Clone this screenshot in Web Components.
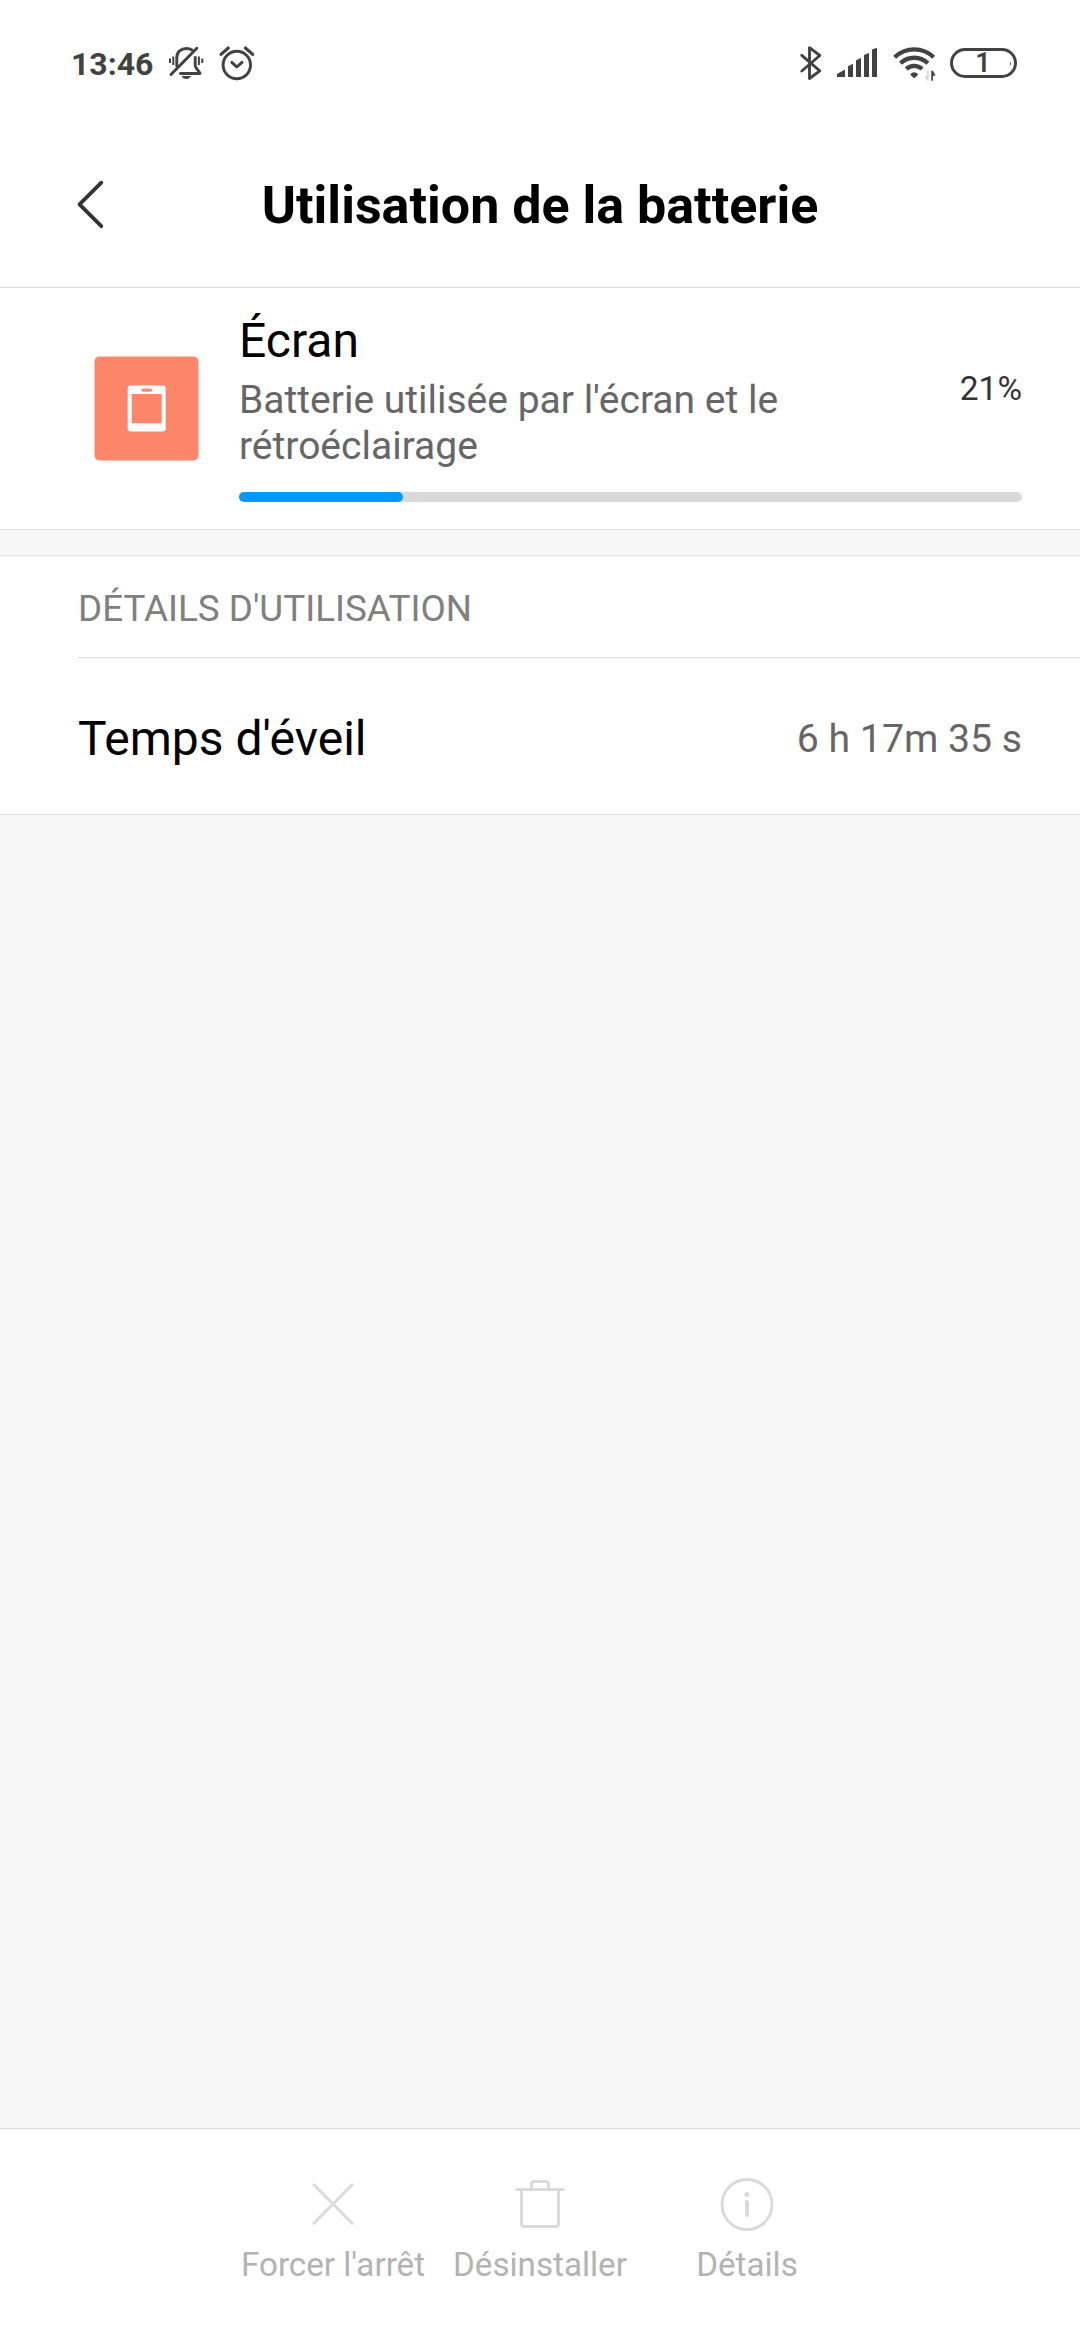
<!DOCTYPE html>
<html lang="fr">
<head>
<meta charset="utf-8">
<title>Utilisation de la batterie</title>
<style>
  body {
    margin: 0;
    background: #f7f7f7;
    font-family: Roboto, "Liberation Sans", sans-serif;
    color: #000;
  }
</style>
</head>
<body>
<battery-page>
  <status-bar slot="top" time="13:46" level="1"></status-bar>
  <title-bar slot="top">Utilisation de la batterie</title-bar>

  <usage-card percent="21">
    <span slot="name">Écran</span>
    <span slot="summary">Batterie utilisée par l'écran et le rétroéclairage</span>
  </usage-card>
  <detail-section heading="DÉTAILS D'UTILISATION">
    <detail-row value="6 h 17m 35 s">Temps d'éveil</detail-row>
  </detail-section>

  <action-bar slot="bottom">
    <action-item icon="close">Forcer l'arrêt</action-item>
    <action-item icon="trash">Désinstaller</action-item>
    <action-item icon="info">Détails</action-item>
  </action-bar>
</battery-page>

<script>
class BatteryPage extends HTMLElement {
  connectedCallback() {
    if (this.shadowRoot) return;
    this.attachShadow({ mode: "open" }).innerHTML = `
      <style>
        :host {
          display: flex;
          flex-direction: column;
          width: 1080px;
          height: 2340px;
          overflow: hidden;
          background: #f7f7f7;
        }
        main { flex: 1; }
      </style>
      <slot name="top"></slot>
      <main><slot></slot></main>
      <slot name="bottom"></slot>
    `;
  }
}

class StatusBar extends HTMLElement {
  connectedCallback() {
    if (this.shadowRoot) return;
    this.attachShadow({ mode: "open" }).innerHTML = `
      <style>
        :host {
          display: flex;
          justify-content: space-between;
          height: 84px;
          padding: 40px 63px 0 71px;
          box-sizing: border-box;
          background: #fff;
          color: #424242;
        }
        .side { display: flex; align-items: center; height: 46px; }
        .time {
          width: 95px;
          padding-top: 1px;
          font-size: 32px;
          font-weight: 700;
          line-height: 46px;
        }
        svg { display: block; fill: none; stroke: currentColor; }
        .battery {
          display: flex;
          align-items: center;
          justify-content: center;
          width: 67px;
          height: 30px;
          box-sizing: border-box;
          border: 3px solid #424242;
          border-radius: 15px;
          font-size: 27px;
          font-weight: 600;
          line-height: 24px;
        }
        .battery span { flex: 1; text-align: center; padding-left: 3px; }
        .battery i { width: 1px; height: 3px; margin-right: 3px; background: #e05050; }
      </style>
      <div class="side">
        <span class="time">${this.getAttribute("time")}</span>
        <svg width="110" height="46" viewBox="166 40 110 46" stroke-width="2.9" stroke-linecap="round" stroke-linejoin="round">
          <!-- muted bell -->
          <path d="M171 74.5L196.8 48.3" stroke-width="3"/>
          <path d="M176.8 66V57.5C176.8 52 181 48.5 186.500 48.5C188.700 48.5 190.500 49 192 50"/>
          <path d="M195.200 57.5V65C195.200 69 200 71.500 200 73.5H180.500"/>
          <path d="M181.500 76H191Q189.500 79 186.300 79Q183 79 181.500 76Z" fill="currentColor" stroke="none"/>
          <path d="M170 58.5V63M173.300 56.5V65M198.900 56.5V65M202.300 58.5V63" stroke-width="2" stroke-linecap="butt"/>
          <!-- alarm clock -->
          <circle cx="236.800" cy="65" r="13.700"/>
          <path d="M231.800 62.400L236.800 67L242 62.400" stroke-width="3"/>
          <path d="M221 54.400L228.300 48M245.400 48L252.700 54.400" stroke-width="3.200"/>
        </svg>
      </div>
      <div class="side">
        <svg width="152" height="46" viewBox="798 40 152 46" stroke-width="2.900" stroke-linecap="round" stroke-linejoin="round">
          <!-- bluetooth -->
          <path d="M801.800 55.300L819.800 70.800L809.500 78.500V47.700L819.800 55.500L801.800 71"/>
          <!-- signal -->
          <path d="M837 77V74L845 69.500V77ZM848 77V66.300L853 63.700V77ZM856 77V60.300L861 58V77ZM864 77V55L869 53V77ZM872 77V49.500L877 47.800V77Z" fill="currentColor" stroke="none"/>
          <!-- wifi -->
          <path d="M894.700 57.300A28 28 0 0 1 933.700 57.300M900.500 63.200A20 20 0 0 1 927.900 63.200M906.300 69A11.500 11.500 0 0 1 922.100 69" stroke-width="4.300" stroke-linecap="butt"/>
          <path d="M910.300 74Q914.200 70.500 918 74Q917.500 76.500 914.200 78.300Q911 76.500 910.300 74Z" fill="currentColor" stroke="none"/>
          <path d="M928.700 71V80.500H927L924.500 76H927V71Z" fill="#d8d8d8" stroke="none"/>
          <path d="M931.300 80.700V70.700H933L935.600 75.700H933V80.700Z" fill="currentColor" stroke="none"/>
        </svg>
        <div class="battery"><span>${this.getAttribute("level")}</span><i></i></div>
      </div>
    `;
  }
}

class TitleBar extends HTMLElement {
  connectedCallback() {
    if (this.shadowRoot) return;
    this.attachShadow({ mode: "open" }).innerHTML = `
      <style>
        :host {
          display: grid;
          grid-template-columns: 62px 1fr 62px;
          align-items: center;
          height: 204px;
          padding: 40px 60px 0;
          box-sizing: border-box;
          background: #fff;
          border-bottom: 1px solid #d9d9d9;
        }
        svg { display: block; margin-top: -4px; }
        h1 {
          margin: 0;
          font-size: 52px;
          font-weight: 700;
          line-height: 64px;
          text-align: center;
          white-space: nowrap;
        }
      </style>
      <svg width="60" height="60" viewBox="60 174 60 60" fill="none" stroke="#333" stroke-width="3.8" stroke-linecap="round" stroke-linejoin="round">
        <path d="M101.3 182.7L79.5 204.4L101.3 226.2"/>
      </svg>
      <h1><slot></slot></h1>
    `;
  }
}

class UsageCard extends HTMLElement {
  connectedCallback() {
    if (this.shadowRoot) return;
    const percent = this.getAttribute("percent");
    this.attachShadow({ mode: "open" }).innerHTML = `
      <style>
        :host {
          display: flex;
          height: 242px;
          padding: 25px 58px 0 94px;
          box-sizing: border-box;
          background: #fff;
          border-bottom: 1px solid #e2e2e2;
        }
        .icon { flex: none; margin: 43px 40px 0 0; }
        .body { flex: 1; }
        .line { display: flex; justify-content: space-between; align-items: center; }
        .text { width: 600px; }
        .name { font-size: 48px; line-height: 56px; }
        .summary { margin-top: 8px; font-size: 39px; line-height: 46px; color: #666; }
        .percent { margin-top: -4px; font-size: 33.5px; line-height: 40px; color: #333; }
        .track { height: 10px; margin-top: 23px; border-radius: 5px; background: #d9d9d9; }
        .fill { height: 10px; border-radius: 5px; background: #0099ff; }
      </style>
      <svg class="icon" width="105" height="105" viewBox="0 0 105 105">
        <rect x=".5" y=".5" width="104" height="104" rx="5" fill="#fc8669"/>
        <rect x="33.7" y="29.5" width="38" height="46" rx="3" fill="#fff"/>
        <path d="M37.7 38H67.7V67.3H37.7Z" fill="#fc8669"/>
        <rect x="47.5" y="32.5" width="10.5" height="3.3" rx="1.6" fill="#fc8669"/>
      </svg>
      <div class="body">
        <div class="line">
          <div class="text">
            <div class="name"><slot name="name"></slot></div>
            <div class="summary"><slot name="summary"></slot></div>
          </div>
          <span class="percent">${percent}%</span>
        </div>
        <div class="track"><div class="fill" style="width: ${percent}%"></div></div>
      </div>
    `;
  }
}

class DetailSection extends HTMLElement {
  connectedCallback() {
    if (this.shadowRoot) return;
    this.attachShadow({ mode: "open" }).innerHTML = `
      <style>
        :host {
          display: block;
          margin-top: 25px;
          background: #fff;
          border-top: 1px solid #e2e2e2;
          border-bottom: 1px solid #e2e2e2;
        }
        h2 {
          margin: 0 0 0 78px;
          height: 102px;
          padding-top: 31px;
          box-sizing: border-box;
          border-bottom: 1px solid #d9d9d9;
          font-size: 36.8px;
          font-weight: 400;
          line-height: 44px;
          color: #808080;
        }
      </style>
      <h2>${this.getAttribute("heading")}</h2>
      <slot></slot>
    `;
  }
}

class DetailRow extends HTMLElement {
  connectedCallback() {
    if (this.shadowRoot) return;
    this.attachShadow({ mode: "open" }).innerHTML = `
      <style>
        :host {
          display: flex;
          justify-content: space-between;
          align-items: center;
          height: 156px;
          padding: 5px 58px 0 78px;
          box-sizing: border-box;
          font-size: 48px;
          line-height: 56px;
        }
        .value { font-size: 39.2px; color: #666; }
      </style>
      <span><slot></slot></span>
      <span class="value">${this.getAttribute("value")}</span>
    `;
  }
}

class ActionBar extends HTMLElement {
  connectedCallback() {
    if (this.shadowRoot) return;
    this.attachShadow({ mode: "open" }).innerHTML = `
      <style>
        :host {
          display: grid;
          grid-template-columns: repeat(3, 207px);
          justify-content: center;
          height: 212px;
          padding-top: 45px;
          box-sizing: border-box;
          background: #fff;
          border-top: 1px solid #d9d9d9;
        }
      </style>
      <slot></slot>
    `;
  }
}

const ACTION_ICONS = {
  close: `<path d="M10.8 10.8L49.2 49.2M49.2 10.8L10.8 49.2"/>`,
  trash: `<path d="M6.5 15.5H53.5M21.5 15V10Q21.5 7.5 24 7.5H36Q38.5 7.5 38.5 10V15M11.5 16V50Q11.5 52.5 14 52.5H46Q48.5 52.5 48.5 50V16"/>`,
  info: `<circle cx="30" cy="30.5" r="25"/>
         <circle cx="30" cy="20.5" r="2.6" fill="#dcdcdc" stroke="none"/>
         <path d="M30 28V41" stroke-width="4.2"/>`
};

class ActionItem extends HTMLElement {
  connectedCallback() {
    if (this.shadowRoot) return;
    this.attachShadow({ mode: "open" }).innerHTML = `
      <style>
        :host {
          display: flex;
          flex-direction: column;
          align-items: center;
          gap: 11px;
          font-size: 33.2px;
          line-height: 40px;
          color: #b3b3b3;
          white-space: nowrap;
        }
        svg { fill: none; stroke: #dadada; stroke-width: 2.9; stroke-linecap: round; stroke-linejoin: round; }
      </style>
      <svg width="60" height="60" viewBox="0 0 60 60">${ACTION_ICONS[this.getAttribute("icon")]}</svg>
      <span><slot></slot></span>
    `;
  }
}

customElements.define("battery-page", BatteryPage);
customElements.define("status-bar", StatusBar);
customElements.define("title-bar", TitleBar);
customElements.define("usage-card", UsageCard);
customElements.define("detail-section", DetailSection);
customElements.define("detail-row", DetailRow);
customElements.define("action-bar", ActionBar);
customElements.define("action-item", ActionItem);
</script>
</body>
</html>
